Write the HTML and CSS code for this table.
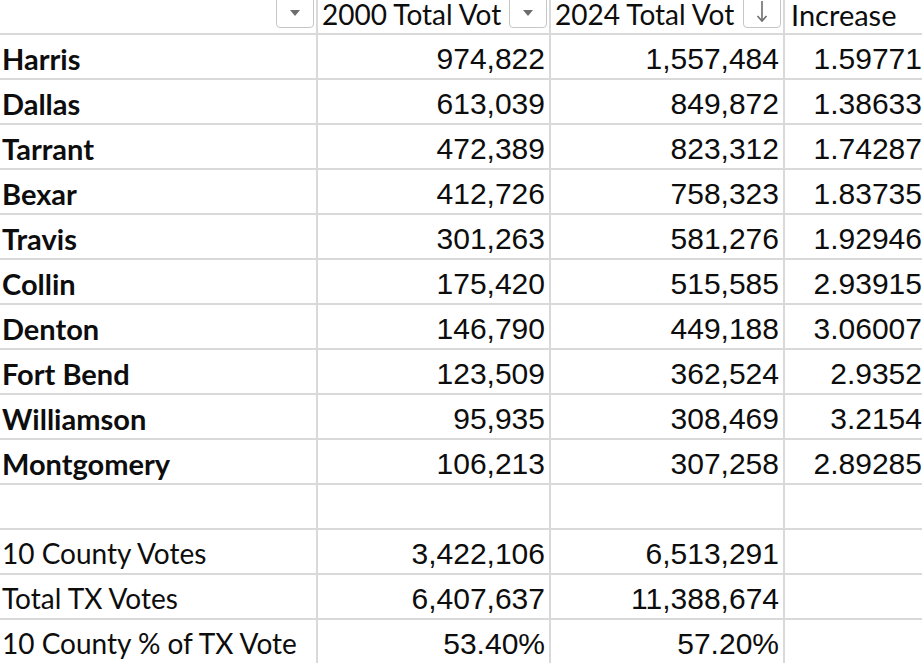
FILE: index.html
```html
<!DOCTYPE html>
<html>
<head>
<meta charset="utf-8">
<link rel="stylesheet" href="styles.css">
</head>
<body>
<div class="sheet">
  <div class="cell head"><span class="filter"><svg width="14" height="10" viewBox="0 0 14 10"><path d="M2 2 L12 2 L7 8 Z" fill="#6d6d6d"/></svg></span></div>
  <div class="cell head"><span class="htext">2000 Total Vot</span><span class="filter"><svg width="14" height="10" viewBox="0 0 14 10"><path d="M2 2 L12 2 L7 8 Z" fill="#6d6d6d"/></svg></span></div>
  <div class="cell head"><span class="htext">2024 Total Vot</span><span class="filter"><svg width="16" height="24" viewBox="0 0 16 24"><path d="M8 0 V19" stroke="#6d6d6d" stroke-width="1.6"/><path d="M3.5 15 L8 20 L12.5 15" stroke="#6d6d6d" stroke-width="1.6" fill="none"/></svg></span></div>
  <div class="cell head last"><span class="htext">Increase</span></div>

  <div class="cell label bold">Harris</div><div class="cell num">974,822</div><div class="cell num">1,557,484</div><div class="cell num last">1.59771</div>
  <div class="cell label bold">Dallas</div><div class="cell num">613,039</div><div class="cell num">849,872</div><div class="cell num last">1.38633</div>
  <div class="cell label bold">Tarrant</div><div class="cell num">472,389</div><div class="cell num">823,312</div><div class="cell num last">1.74287</div>
  <div class="cell label bold">Bexar</div><div class="cell num">412,726</div><div class="cell num">758,323</div><div class="cell num last">1.83735</div>
  <div class="cell label bold">Travis</div><div class="cell num">301,263</div><div class="cell num">581,276</div><div class="cell num last">1.92946</div>
  <div class="cell label bold">Collin</div><div class="cell num">175,420</div><div class="cell num">515,585</div><div class="cell num last">2.93915</div>
  <div class="cell label bold">Denton</div><div class="cell num">146,790</div><div class="cell num">449,188</div><div class="cell num last">3.06007</div>
  <div class="cell label bold">Fort Bend</div><div class="cell num">123,509</div><div class="cell num">362,524</div><div class="cell num last">2.9352</div>
  <div class="cell label bold">Williamson</div><div class="cell num">95,935</div><div class="cell num">308,469</div><div class="cell num last">3.2154</div>
  <div class="cell label bold">Montgomery</div><div class="cell num">106,213</div><div class="cell num">307,258</div><div class="cell num last">2.89285</div>

  <div class="cell label"></div><div class="cell num"></div><div class="cell num"></div><div class="cell num last"></div>

  <div class="cell label">10 County Votes</div><div class="cell num">3,422,106</div><div class="cell num">6,513,291</div><div class="cell num last"></div>
  <div class="cell label">Total TX Votes</div><div class="cell num">6,407,637</div><div class="cell num">11,388,674</div><div class="cell num last"></div>
  <div class="cell label">10 County % of TX Vote</div><div class="cell num">53.40%</div><div class="cell num">57.20%</div><div class="cell num last"></div>
</div>
</body>
</html>
```
FILE: styles.css
```css
html, body {
  margin: 0;
  padding: 0;
  background: #ffffff;
}
.sheet {
  display: grid;
  grid-template-columns: 318px 233px 234px 1fr;
  grid-template-rows: 35px repeat(14, 45px);
  width: 922px;
  color: #0d0d0d;
}
.cell {
  box-sizing: border-box;
  border-right: 2px solid #d9d9d9;
  border-bottom: 2px solid #d9d9d9;
  white-space: nowrap;
}
.cell.last {
  border-right: none;
}
.head {
  position: relative;
  font-family: "Lato", "Liberation Sans", sans-serif;
  font-size: 28px;
  line-height: 29px;
  padding-left: 4px;
}
.head.last {
  padding-left: 6px;
  font-size: 29px;
}
.htext {
  display: block;
}
.filter {
  position: absolute;
  right: 2px;
  top: -3px;
  width: 38px;
  height: 31px;
  box-sizing: border-box;
  border: 1px solid #c6c6c6;
  border-radius: 0 0 4px 4px;
  background: #ffffff;
  display: flex;
  align-items: center;
  justify-content: center;
}
.label {
  font-family: "Lato", "Liberation Sans", sans-serif;
  font-size: 28px;
  line-height: 43px;
  padding-left: 2px;
  padding-top: 2px;
}
.label.bold {
  font-size: 29px;
  font-weight: 700;
}
.num {
  font-family: "Liberation Sans", Arial, sans-serif;
  font-size: 30px;
  line-height: 43px;
  text-align: right;
  padding-right: 4px;
  padding-top: 2px;
}
.num.last {
  padding-right: 0;
}
```
